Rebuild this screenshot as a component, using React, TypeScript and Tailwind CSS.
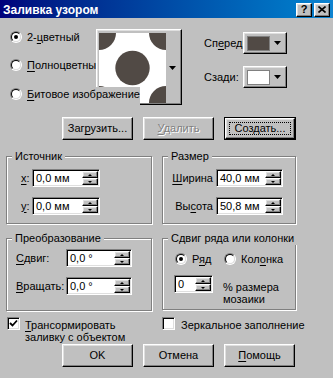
import type { ReactNode } from "react";

const raised =
  "border border-t-white border-l-white border-r-black border-b-black shadow-[inset_-1px_-1px_0_#808080,inset_1px_1px_0_#dfdfdf]";
const sunken =
  "border border-t-[#808080] border-l-[#808080] border-r-white border-b-white shadow-[inset_1px_1px_0_#000,inset_-1px_-1px_0_#dfdfdf]";

function U({ children }: { children: ReactNode }) {
  return <span className="underline decoration-1 underline-offset-[2px]">{children}</span>;
}

function Radio({ checked }: { checked?: boolean }) {
  return (
    <div className="w-[12px] h-[12px] shrink-0 rounded-full border border-t-[#808080] border-l-[#808080] border-r-white border-b-white flex">
      <div className="flex-1 rounded-full bg-white border border-t-black border-l-black border-r-[#dfdfdf] border-b-[#dfdfdf] flex items-center justify-center">
        {checked && <div className="w-[4px] h-[4px] rounded-full bg-black" />}
      </div>
    </div>
  );
}

function Checkbox({ checked }: { checked?: boolean }) {
  return (
    <div className={`w-[13px] h-[13px] shrink-0 bg-white flex items-center justify-center ${sunken}`}>
      {checked && (
        <svg width="9" height="9" viewBox="0 0 9 9">
          <polyline points="1,4 3.5,6.5 8,1.5" fill="none" stroke="#000" strokeWidth="1.8" />
        </svg>
      )}
    </div>
  );
}

function Btn({
  children,
  disabled,
  def,
}: {
  children: ReactNode;
  disabled?: boolean;
  def?: boolean;
}) {
  const label = (
    <span
      className={
        disabled ? "text-[#808080] [text-shadow:1px_1px_0_#fff]" : "text-black"
      }
    >
      {children}
    </span>
  );
  if (def) {
    return (
      <div className="w-[72px] h-[23px] border border-black flex">
        <div className={`relative flex-1 flex items-center justify-center ${raised}`}>
          <div className="absolute inset-[3px] border border-dotted border-black" />
          {label}
        </div>
      </div>
    );
  }
  return (
    <div className={`w-[71px] h-[23px] flex items-center justify-center ${raised}`}>
      {label}
    </div>
  );
}

function SpinBtn({ up }: { up?: boolean }) {
  return (
    <div className={`h-[7px] bg-[#c0c0c0] flex items-center justify-center ${raised}`}>
      {up ? (
        <div className="w-0 h-0 border-x-[2px] border-x-transparent border-b-[2px] border-b-black" />
      ) : (
        <div className="w-0 h-0 border-x-[2px] border-x-transparent border-t-[2px] border-t-black" />
      )}
    </div>
  );
}

function Spin({ value, w }: { value: string; w: string }) {
  return (
    <div className={`${w} h-[18px] shrink-0 flex bg-white p-[1px] ${sunken}`}>
      <div className="flex-1 pl-[2px] leading-[14px] overflow-hidden whitespace-nowrap">{value}</div>
      <div className="w-[16px] flex flex-col">
        <SpinBtn up />
        <SpinBtn />
      </div>
    </div>
  );
}

function Group({
  title,
  className,
  children,
}: {
  title: string;
  className: string;
  children: ReactNode;
}) {
  return (
    <div
      className={`relative border border-[#808080] shadow-[inset_1px_1px_0_#fff,1px_1px_0_#fff] ${className}`}
    >
      <span className="absolute left-[5px] -top-[7px] px-[3px] bg-[#c0c0c0] whitespace-nowrap leading-[13px]">
        {title}
      </span>
      {children}
    </div>
  );
}

function ColorBtn({ color }: { color: string }) {
  return (
    <div className={`w-[44px] h-[22px] shrink-0 flex items-center pl-[3px] ${raised}`}>
      <div className="w-[23px] h-[15px] border border-[#808080]" style={{ background: color }} />
      <svg width="7" height="4" viewBox="0 0 7 4" className="ml-[4px]">
        <polygon points="0,0 7,0 3.5,4" fill="#000" />
      </svg>
    </div>
  );
}

function Pattern() {
  return (
    <svg width="67" height="70" viewBox="0 0 67 70" className="block">
      <rect width="67" height="70" fill="#fff" />
      <g fill="#514a45">
        <circle cx="0" cy="0" r="17" />
        <circle cx="67" cy="0" r="17" />
        <circle cx="33.5" cy="35" r="17.2" />
        <circle cx="67" cy="70" r="17" />
        <circle cx="0" cy="70" r="17" />
      </g>
    </svg>
  );
}

export default function App() {
  return (
    <div className="w-[333px] h-[378px] overflow-hidden bg-[#c0c0c0] text-black text-[11px] leading-[13px] font-['Liberation_Sans',Arial,sans-serif] select-none">
      {/* title bar */}
      <div className="h-[18px] flex items-center pl-[3px] pr-[3px] pt-[1px] bg-linear-to-r from-[#00007b] to-[#1084d0]">
        <span className="flex-1 text-white font-bold text-[12px] leading-[14px]">Заливка узором</span>
        <div className={`w-[16px] h-[14px] bg-[#c0c0c0] flex items-center justify-center font-bold text-[11px] ${raised}`}>
          ?
        </div>
        <div className={`w-[16px] h-[14px] ml-[2px] bg-[#c0c0c0] flex items-center justify-center ${raised}`}>
          <svg width="8" height="7" viewBox="0 0 8 7">
            <path d="M0.5 0.5 L7.5 6.5 M7.5 0.5 L0.5 6.5" stroke="#000" strokeWidth="1.6" />
          </svg>
        </div>
      </div>

      {/* pattern type + preview + colours */}
      <div className="h-[99px] flex pt-[11px]">
        <div className="w-[86px] ml-[10px] shrink-0 flex flex-col">
          <div className="h-[16px] flex items-center gap-[5px] whitespace-nowrap">
            <Radio checked />
            <span>
              2-<U>ц</U>ветный
            </span>
          </div>
          <div className="h-[16px] mt-[12px] flex items-center gap-[5px] whitespace-nowrap overflow-hidden">
            <Radio />
            <span>
              <U>П</U>олноцветный
            </span>
          </div>
          <div className="relative z-10 h-[19px] mt-[14px] flex items-start gap-[5px] whitespace-nowrap">
            <div className="mt-[1px]">
              <Radio />
            </div>
            <span className="h-[19px] pt-[1px] bg-[#c0c0c0]">
              <U>Б</U>итовое изображение
            </span>
          </div>
        </div>

        <div className={`relative w-[86px] h-[76px] shrink-0 flex pl-[2px] pt-[3px] ${raised}`}>
          <Pattern />
          <svg width="7" height="4" viewBox="0 0 7 4" className="ml-[3px] self-center -mt-[2px]">
            <polygon points="0,0 7,0 3.5,4" fill="#000" />
          </svg>
        </div>

        <div className="ml-[22px] pt-[3px] flex flex-col">
          <div className="h-[22px] flex items-center">
            <div className="w-[39px] overflow-hidden whitespace-nowrap">
              Сп<U>е</U>реди
            </div>
            <ColorBtn color="#514a45" />
          </div>
          <div className="h-[22px] mt-[12px] flex items-center">
            <div className="w-[39px] overflow-hidden whitespace-nowrap">
              Сза<U>д</U>и:
            </div>
            <ColorBtn color="#ffffff" />
          </div>
        </div>
      </div>

      {/* file buttons */}
      <div className="h-[23px] flex gap-[10px] pl-[62px]">
        <Btn>
          Заг<U>р</U>узить...
        </Btn>
        <Btn disabled>
          <U>У</U>далить
        </Btn>
        <Btn def>Создать...</Btn>
      </div>

      {/* source + size */}
      <div className="flex items-start gap-[10px] pl-[6px] mt-[16px]">
        <Group title="Источник" className="w-[146px] h-[68px] pt-[12px] pl-[14px]">
          <div className="flex items-center">
            <span className="w-[11px]">
              <U>x</U>:
            </span>
            <Spin value="0,0 мм" w="w-[68px]" />
          </div>
          <div className="flex items-center mt-[10px]">
            <span className="w-[11px]">
              <U>y</U>:
            </span>
            <Spin value="0,0 мм" w="w-[68px]" />
          </div>
        </Group>
        <Group title="Размер" className="w-[134px] h-[68px] pt-[12px] pl-[8px]">
          <div className="flex items-center">
            <span className="w-[42px] text-right mr-[3px]">
              <U>Ш</U>ирина
            </span>
            <Spin value="40,0 мм" w="w-[67px]" />
          </div>
          <div className="flex items-center mt-[10px]">
            <span className="w-[42px] text-right mr-[3px]">
              Вы<U>с</U>ота
            </span>
            <Spin value="50,8 мм" w="w-[67px]" />
          </div>
        </Group>
      </div>

      {/* transform + row/column offset */}
      <div className="flex items-start gap-[10px] pl-[6px] mt-[14px]">
        <Group title="Преобразование" className="w-[146px] h-[73px] pt-[10px] pl-[9px]">
          <div className="flex items-center">
            <span className="w-[50px]">
              <U>С</U>двиг:
            </span>
            <Spin value="0,0 °" w="w-[66px]" />
          </div>
          <div className="flex items-center mt-[10px]">
            <span className="w-[50px]">
              <U>В</U>ращать:
            </span>
            <Spin value="0,0 °" w="w-[66px]" />
          </div>
        </Group>
        <Group title="Сдвиг ряда или колонки" className="w-[134px] h-[72px] pt-[12px] pl-[12px]">
          <div className="h-[16px] flex items-center">
            <div className="w-[49px] flex items-center gap-[5px]">
              <Radio checked />
              <span>
                Р<U>я</U>д
              </span>
            </div>
            <div className="flex items-center gap-[5px]">
              <Radio />
              <span>
                Кол<U>о</U>нка
              </span>
            </div>
          </div>
          <div className="flex items-start mt-[8px] -ml-[1px]">
            <Spin value="0" w="w-[39px]" />
            <div className="ml-[10px] mt-[6px] leading-[12px]">
              % размера
              <br />
              мозаики
            </div>
          </div>
        </Group>
      </div>

      {/* checkboxes */}
      <div className="h-[27px] flex items-start pl-[7px] mt-[6px]">
        <div className="w-[155px] flex items-start gap-[5px]">
          <Checkbox checked />
          <div className="mt-[2px] leading-[12px]">
            <U>Т</U>рансормировать
            <br />
            заливку с объектом
          </div>
        </div>
        <div className="flex items-start gap-[6px] whitespace-nowrap">
          <Checkbox />
          <div className="mt-[2px] leading-[12px]">Зеркальное заполнение</div>
        </div>
      </div>

      {/* dialog buttons */}
      <div className="h-[23px] flex gap-[10px] pl-[62px]">
        <Btn>OK</Btn>
        <Btn>Отмена</Btn>
        <Btn>
          <U>П</U>омощь
        </Btn>
      </div>
    </div>
  );
}
